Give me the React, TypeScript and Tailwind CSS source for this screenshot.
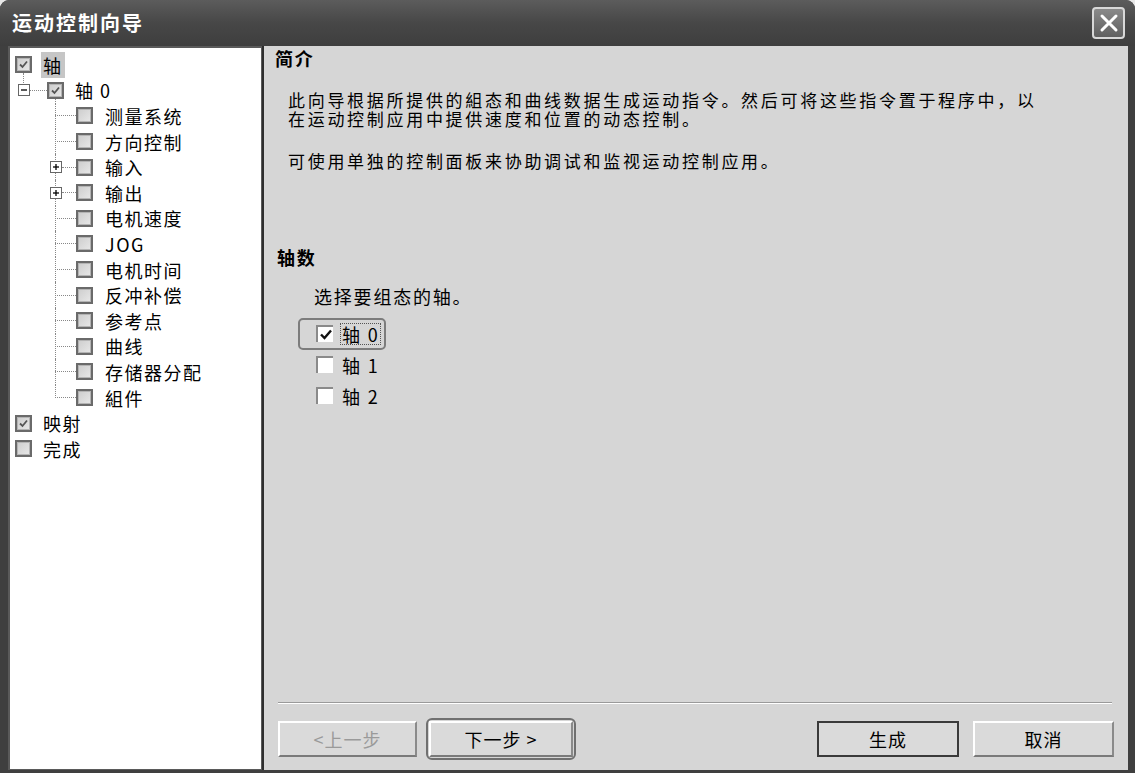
import React from "react";

const FONT = "font-['Noto_Sans_CJK_SC','Noto_Sans',sans-serif]";

type TreeItem = {
  label: string;
  level: 0 | 1 | 2;
  checked?: boolean;
  expander?: "plus" | "minus";
  selected?: boolean;
  last?: boolean;
};

const TREE: TreeItem[] = [
  { label: "轴", level: 0, checked: true, selected: true },
  { label: "轴 0", level: 1, checked: true, expander: "minus" },
  { label: "测量系统", level: 2 },
  { label: "方向控制", level: 2 },
  { label: "输入", level: 2, expander: "plus" },
  { label: "输出", level: 2, expander: "plus" },
  { label: "电机速度", level: 2 },
  { label: "JOG", level: 2 },
  { label: "电机时间", level: 2 },
  { label: "反冲补偿", level: 2 },
  { label: "参考点", level: 2 },
  { label: "曲线", level: 2 },
  { label: "存储器分配", level: 2 },
  { label: "組件", level: 2, last: true },
  { label: "映射", level: 0, checked: true },
  { label: "完成", level: 0 },
];

const TreeCheck = ({ checked }: { checked?: boolean }) => (
  <span className="flex h-[17px] w-[17px] shrink-0 items-center justify-center border-2 border-[#6a6a6a] bg-[#b4b4b4]">
    <span className="flex h-[11px] w-[11px] items-center justify-center bg-gradient-to-br from-[#cfcfcf] to-[#e6e6e6]">
      {checked && (
        <svg width="9" height="9" viewBox="0 0 9 9">
          <path d="M1 4.5 L3.5 7 L8 1.5" fill="none" stroke="#555" strokeWidth="1.8" />
        </svg>
      )}
    </span>
  </span>
);

const Expander = ({ kind }: { kind: "plus" | "minus" }) => (
  <span className="relative z-10 flex h-[12px] w-[12px] shrink-0 items-center justify-center border border-[#666] bg-white">
    <svg width="8" height="8" viewBox="0 0 8 8">
      <path d="M1 4 H7" stroke="#000" strokeWidth="1.3" />
      {kind === "plus" && <path d="M4 1 V7" stroke="#000" strokeWidth="1.3" />}
    </svg>
  </span>
);

const TreeRow = ({ item }: { item: TreeItem }) => {
  const text = (
    <span className={"px-[2px] leading-[24px] " + (item.selected ? "bg-[#c6c6c6]" : "")}>
      {item.label}
    </span>
  );

  if (item.level === 0) {
    return (
      <div className="relative flex h-[25.6px] items-center pl-[5px]">
        <TreeCheck checked={item.checked} />
        <span className="ml-[9px]">{text}</span>
        {item.selected && (
          <span className="absolute left-[13px] top-[21px] h-[16px] border-l border-dotted border-[#888]" />
        )}
      </div>
    );
  }

  if (item.level === 1) {
    return (
      <div className="relative flex h-[25.6px] items-center pl-[8px]">
        <Expander kind={item.expander ?? "minus"} />
        <span className="w-[17px] border-t border-dotted border-[#888]" />
        <TreeCheck checked={item.checked} />
        <span className="ml-[9px]">{text}</span>
        <span className="absolute left-[45px] top-[21px] h-[5px] border-l border-dotted border-[#888]" />
      </div>
    );
  }

  return (
    <div className="relative flex h-[25.6px] items-center pl-[40px]">
      <span
        className={
          "absolute left-[45px] top-0 border-l border-dotted border-[#888] " +
          (item.last ? "h-[13px]" : "h-full")
        }
      />
      {item.expander ? (
        <>
          <Expander kind={item.expander} />
          <span className="w-[14px] border-t border-dotted border-[#888]" />
        </>
      ) : (
        <span className="ml-[5px] w-[21px] border-t border-dotted border-[#888]" />
      )}
      <TreeCheck />
      <span className="ml-[10px]">{text}</span>
    </div>
  );
};

const AxisCheck = ({ checked, label, focused }: { checked?: boolean; label: string; focused?: boolean }) => (
  <div className="flex h-[31px] items-center">
    <div
      className={
        "ml-[34px] flex h-[32px] items-center rounded-[5px] border-2 pl-[16px] pr-[4px] " +
        (focused ? "border-[#7c7c7c]" : "border-transparent")
      }
    >
      <span className="flex h-[17px] w-[17px] items-center justify-center border-l-2 border-t-2 border-[#8a8a8a] bg-white">
        {checked && (
          <svg width="12" height="11" viewBox="0 0 12 11">
            <path d="M1 5.5 L4.5 9 L11 1.5" fill="none" stroke="#111" strokeWidth="2.4" />
          </svg>
        )}
      </span>
      <span className={"ml-[8px] px-[1px] leading-[20px] " + (focused ? "outline-1 outline-dotted outline-[#555]" : "")}>
        {label}
      </span>
    </div>
  </div>
);

const WinButton = ({
  children,
  disabled,
  isDefault,
  className = "",
}: {
  children: React.ReactNode;
  disabled?: boolean;
  isDefault?: boolean;
  className?: string;
}) => (
  <button
    className={
      "flex h-[36px] items-center justify-center border-2 bg-[#dadada] text-[18px] tracking-[1px] " +
      (isDefault
        ? "border-[#3a3a3a] "
        : "border-b-[#7a7a7a] border-l-white border-r-[#8a8a8a] border-t-white ") +
      (disabled ? "text-[#9a9a9a] " : "text-black ") +
      className
    }
  >
    {children}
  </button>
);

export default function App() {
  return (
    <div className={"h-[773px] w-[1135px] overflow-hidden bg-[#e8e8e8] " + FONT}>
      <div className="flex h-full w-full flex-col rounded-t-[9px] bg-[#3f3f3f]">
        <div className="flex h-[46px] shrink-0 items-center justify-between rounded-t-[9px] bg-gradient-to-b from-[#5c5c5c] via-[#474747] to-[#3e3e3e] pl-[12px] pr-[10px]">
          <span className="text-[20px] font-bold tracking-[2px] text-white">运动控制向导</span>
          <span className="flex h-[32px] w-[33px] items-center justify-center rounded-[4px] border-2 border-[#d8d8d8] bg-gradient-to-b from-[#8a8a8a] to-[#606060]">
            <svg width="20" height="20" viewBox="0 0 20 20">
              <path d="M3 3 L17 17 M17 3 L3 17" stroke="#fff" strokeWidth="3" strokeLinecap="round" />
            </svg>
          </span>
        </div>

        <div className="flex min-h-0 flex-1 pb-[3px] pl-[8px] pr-[7px]">
          <div className="w-[254px] shrink-0 border-b border-l-2 border-r border-t-2 border-[#5a5a5a] bg-white pt-[4px] text-[18px] leading-[22px] tracking-[1.5px] text-black">
            {TREE.map((item, i) => (
              <TreeRow key={i} item={item} />
            ))}
          </div>

          <div className="flex min-w-0 flex-1 flex-col border-l-2 border-[#2e2e2e] bg-[#d6d6d6] text-[18px] tracking-[1.8px] text-black">
            <div className="pl-[11px] pt-[2px] text-[18px] font-bold leading-[20px]">简介</div>
            <div className="mt-[22px] whitespace-nowrap pl-[24px] text-[17px] leading-[19px] tracking-[2.7px]">
              <p>此向导根据所提供的組态和曲线数据生成运动指令。然后可将这些指令置于程序中，以</p>
              <p>在运动控制应用中提供速度和位置的动态控制。</p>
              <p className="mt-[23px]">可使用单独的控制面板来协助调试和监视运动控制应用。</p>
            </div>

            <div className="mt-[77px] pl-[13px] font-bold leading-[20px]">轴数</div>
            <div className="mt-[20px] pl-[50px] leading-[19px]">选择要组态的轴。</div>
            <div className="mt-[12px]">
              <AxisCheck checked focused label="轴 0" />
              <AxisCheck label="轴 1" />
              <AxisCheck label="轴 2" />
            </div>

            <div className="flex-1" />

            <div className="ml-[14px] mr-[16px] border-b border-t border-b-white border-t-[#9a9a9a]" />

            <div className="flex items-center px-[14px] pb-[10px] pt-[14px]">
              <WinButton disabled className="w-[139px]">&lt;上一步</WinButton>
              <div className="ml-[9px] rounded-[6px] border-2 border-[#707070] p-[1px]">
                <WinButton className="w-[144px]">下一步 &gt;</WinButton>
              </div>
              <div className="flex-1" />
              <WinButton isDefault className="w-[142px]">生成</WinButton>
              <WinButton className="ml-[14px] w-[141px]">取消</WinButton>
            </div>
          </div>
        </div>
      </div>
    </div>
  );
}
